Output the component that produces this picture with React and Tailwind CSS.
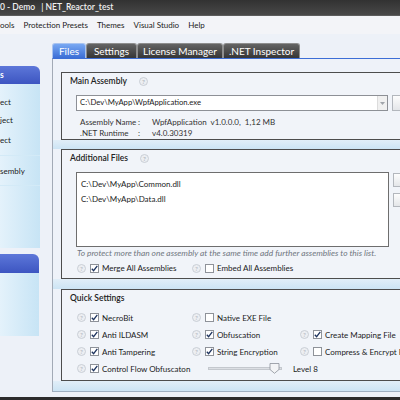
import React from 'react';

const Help = ({ className = '' }) => (
  <svg width="9" height="9" viewBox="0 0 9 9" className={'shrink-0 ' + className}>
    <circle cx="4.5" cy="4.5" r="4" fill="#eceef2" stroke="#c2c6ce" strokeWidth="0.8" />
    <text x="4.5" y="6.9" textAnchor="middle" fontSize="6.5" fill="#aeb3bb" fontFamily="Lato, sans-serif">?</text>
  </svg>
);

const Check = ({ checked }) => (
  <span className="w-[9px] h-[9px] shrink-0 bg-white border border-[#8e9299] flex items-center justify-center">
    {checked && (
      <svg width="7" height="7" viewBox="0 0 7 7">
        <path d="M0.8 3.7 L2.6 5.7 L6.3 0.8" fill="none" stroke="#1d335e" strokeWidth="1.3" />
      </svg>
    )}
  </span>
);

const Option = ({ label, checked }) => (
  <div className="flex items-center whitespace-nowrap">
    <Help />
    <span className="ml-[4px]"><Check checked={checked} /></span>
    <span className="ml-[3px]">{label}</span>
  </div>
);

const Tab = ({ label, active, width }) => (
  <div
    className={
      'h-[15px] flex items-center justify-center text-[10px] text-white rounded-t-[3px] border border-b-0 whitespace-nowrap ' +
      (active
        ? 'bg-gradient-to-b from-[#79a8f2] to-[#3c6ed6] border-[#a8c3f0]'
        : 'bg-gradient-to-b from-[#646464] to-[#363636] border-[#8e8e8e]')
    }
    style={{ width }}
  >
    {label}
  </div>
);

const Band = ({ className = '' }) => (
  <div className={'bg-gradient-to-b from-[#e1eef8] to-[#cce4f4] ' + className} />
);

export default function App() {
  return (
    <div className="w-[400px] h-[400px] overflow-hidden flex flex-col bg-[#edf1f8] font-['Lato',sans-serif] text-[8px] text-[#1b1b1b] leading-none">
      {/* title bar */}
      <div className="h-[16px] shrink-0 bg-gradient-to-b from-[#323232] to-[#484848] border-b border-[#5c5c5c] text-[#f0f0f0] text-[8.5px] font-semibold flex items-center whitespace-nowrap">
        <span>0 - Demo</span>
        <span className="ml-[6px]">| NET_Reactor_test</span>
      </div>

      {/* menu */}
      <div className="h-[18px] shrink-0 bg-[#f3f4f8] flex items-center gap-[9px] whitespace-nowrap">
        <span>ools</span>
        <span>Protection Presets</span>
        <span>Themes</span>
        <span>Visual Studio</span>
        <span>Help</span>
      </div>

      <div className="flex-1 flex min-h-0">
        {/* sidebar */}
        <aside className="w-[52px] shrink-0 flex flex-col pt-[32px]">
          <div className="w-[40px] h-[182px] flex flex-col">
            <div className="h-[18px] rounded-tr-[6px] bg-gradient-to-b from-[#5d77d9] to-[#3d55c1] text-white font-bold text-[8.5px] flex items-center">
              s
            </div>
            <div className="flex-1 bg-gradient-to-r from-[#e4f2fb] to-[#c7e4f5] flex flex-col">
              <div className="h-[10px]" />
              <div className="h-[16px] flex items-center">ect</div>
              <div className="h-[20px] flex items-center">ject</div>
              <div className="h-[20px] flex items-center">ect</div>
              <div className="h-[6px] border-b border-[#d3eaf7]" />
              <div className="h-[30px] flex items-center border-b border-[#d3eaf7]">sembly</div>
            </div>
          </div>
          <div className="w-[39px] h-[82px] mt-[6px] flex flex-col">
            <div className="h-[19px] rounded-tr-[6px] bg-gradient-to-b from-[#5d77d9] to-[#3d55c1]" />
            <div className="flex-1 bg-gradient-to-r from-[#e4f2fb] to-[#c7e4f5]" />
          </div>
        </aside>

        {/* main */}
        <main className="flex-1 flex flex-col min-w-0 pb-[5px]">
          <div className="h-[9px] shrink-0" />
          <div className="flex shrink-0">
            <Tab label="Files" active width={34} />
            <Tab label="Settings" width={51} />
            <Tab label="License Manager" width={86} />
            <Tab label=".NET Inspector" width={77} />
          </div>

          <div className="flex-1 flex flex-col border-l border-t border-b border-l-[#a2aab6] border-t-[#3c6ed6] border-b-[#9fb0c2] overflow-hidden bg-[#eef2f9]">
            <div className="h-[13px] shrink-0" />

            {/* Main Assembly */}
            <div className="pl-[8px] shrink-0">
              <div className="w-[360px] h-[68px] border border-[#4d4d4d] bg-[#f1f4f9] flex flex-col">
                <div className="h-[16px] flex items-center pl-[8px] font-semibold text-[8.5px] text-[#222]">
                  Main Assembly
                  <Help className="ml-[12px]" />
                </div>
                <div className="mt-[6px] flex ml-[14px]">
                  <div className="w-[312px] h-[16px] bg-white border border-[#8d9096] flex items-center">
                    <span className="pl-[3px] flex-1 text-[7.7px]">C:\Dev\MyApp\WpfApplication.exe</span>
                    <span className="w-[10px] h-[14px] bg-[#f0f0f0] border-l border-[#dcdcdc] flex items-center justify-center">
                      <svg width="5" height="3" viewBox="0 0 5 3"><path d="M0 0 H5 L2.5 3 Z" fill="#a0a4aa" /></svg>
                    </span>
                  </div>
                  <div className="ml-[4px] w-[20px] h-[16px] bg-gradient-to-b from-[#fdfdfd] to-[#e4e6e9] border border-[#b3b7bd]" />
                </div>
                <div className="mt-[5px] ml-[18px] text-[#333]">
                  <div className="h-[11px] flex items-center">
                    <span className="w-[58px]">Assembly Name</span>
                    <span className="w-[14px]">:</span>
                    <span className="whitespace-nowrap">WpfApplication&nbsp; v1.0.0.0,&nbsp; 1,12 MB</span>
                  </div>
                  <div className="h-[11px] flex items-center">
                    <span className="w-[58px]">.NET Runtime</span>
                    <span className="w-[14px]">:</span>
                    <span>v4.0.30319</span>
                  </div>
                </div>
              </div>
            </div>
            <Band className="h-[9px] shrink-0" />

            {/* Additional Files */}
            <div className="pl-[8px] shrink-0">
              <div className="w-[360px] h-[130px] border border-[#4d4d4d] bg-[#f1f4f9] flex flex-col">
                <div className="h-[16px] flex items-center pl-[8px] font-semibold text-[8.5px] text-[#222]">
                  Additional Files
                  <Help className="ml-[12px]" />
                </div>
                <div className="mt-[6px] flex ml-[14px]">
                  <div className="w-[313px] h-[75px] bg-white border border-[#6e6e6e] flex flex-col pt-[3px] pl-[4px]">
                    <div className="h-[15px] flex items-center">C:\Dev\MyApp\Common.dll</div>
                    <div className="h-[15px] flex items-center">C:\Dev\MyApp\Data.dll</div>
                  </div>
                  <div className="ml-[4px] flex flex-col">
                    <div className="mt-[1px] w-[20px] h-[14px] bg-gradient-to-b from-[#fdfdfd] to-[#e4e6e9] border border-[#b3b7bd]" />
                    <div className="mt-[6px] w-[20px] h-[14px] bg-gradient-to-b from-[#fdfdfd] to-[#e4e6e9] border border-[#b3b7bd]" />
                  </div>
                </div>
                <div className="h-[12px] flex items-center ml-[15px] italic text-[8.4px] text-[#707680] whitespace-nowrap">
                  To protect more than one assembly at the same time add further assemblies to this list.
                </div>
                <div className="mt-[2px] h-[14px] ml-[15px] grid grid-cols-[115px_1fr] items-center">
                  <Option label="Merge All Assemblies" checked />
                  <Option label="Embed All Assemblies" />
                </div>
              </div>
            </div>
            <Band className="h-[10px] shrink-0" />

            {/* Quick Settings */}
            <div className="pl-[8px] shrink-0">
              <div className="w-[360px] h-[92px] border border-[#4d4d4d] bg-[#f1f4f9] flex flex-col">
                <div className="h-[16px] flex items-center pl-[8px] font-semibold text-[8.5px] text-[#222]">
                  Quick Settings
                </div>
                <div className="mt-[3px] ml-[15px] grid grid-cols-[115px_108px_1fr] auto-rows-[17px] items-center">
                  <Option label="NecroBit" checked />
                  <Option label="Native EXE File" />
                  <div />
                  <Option label="Anti ILDASM" checked />
                  <Option label="Obfuscation" checked />
                  <Option label="Create Mapping File" checked />
                  <Option label="Anti Tampering" checked />
                  <Option label="String Encryption" checked />
                  <Option label="Compress &amp; Encrypt Resources" />
                  <Option label="Control Flow Obfuscaton" checked />
                  <div className="col-span-2 flex items-center">
                    <div className="ml-[16px] w-[74px] h-[3px] bg-[#dcdfe4] border border-[#c4c8ce] relative">
                      <svg width="11" height="11" viewBox="0 0 11 11" className="absolute left-[60px] top-[-5px]">
                        <path d="M1 0.5 H10 V6.5 L5.5 10.3 L1 6.5 Z" fill="#f3f4f6" stroke="#8c9199" strokeWidth="0.8" />
                      </svg>
                    </div>
                    <span className="ml-[11px]">Level 8</span>
                  </div>
                </div>
              </div>
            </div>
            <Band className="flex-1" />
          </div>
        </main>
      </div>

      <div className="h-[3px] shrink-0 bg-[#2c2c2c]" />
    </div>
  );
}
